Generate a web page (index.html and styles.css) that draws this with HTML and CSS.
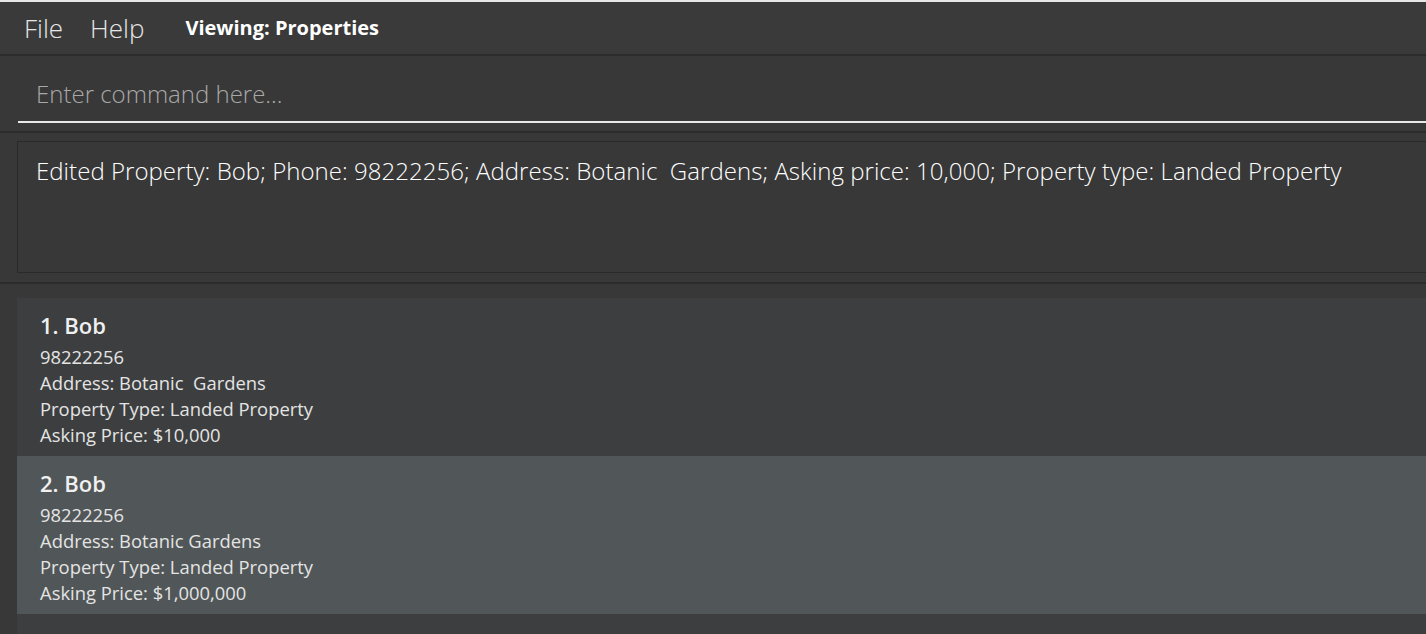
FILE: index.html
```html
<!DOCTYPE html>
<html>
<head>
<meta charset="utf-8">
<link rel="stylesheet" href="styles.css">
</head>
<body>
<div class="window">
  <header class="menubar">
    <span class="menu-item">File</span>
    <span class="menu-item">Help</span>
    <span class="viewing">Viewing: Properties</span>
  </header>
  <section class="command-pane">
    <div class="command-field">Enter command here...</div>
  </section>
  <section class="result-pane">
    <div class="result-box">Edited Property: Bob; Phone: 98222256; Address: Botanic&nbsp; Gardens; Asking price: 10,000; Property type: Landed Property</div>
  </section>
  <section class="list-pane">
    <div class="card even">
      <div class="card-title">1. Bob</div>
      <div class="card-line">98222256</div>
      <div class="card-line">Address: Botanic&nbsp; Gardens</div>
      <div class="card-line">Property Type: Landed Property</div>
      <div class="card-line">Asking Price: $10,000</div>
    </div>
    <div class="card odd">
      <div class="card-title">2. Bob</div>
      <div class="card-line">98222256</div>
      <div class="card-line">Address: Botanic Gardens</div>
      <div class="card-line">Property Type: Landed Property</div>
      <div class="card-line">Asking Price: $1,000,000</div>
    </div>
    <div class="card even">
      <div class="card-title">3. Jack</div>
      <div class="card-line">98222256</div>
    </div>
  </section>
</div>
</body>
</html>
```

FILE: styles.css
```css
html, body {
  margin: 0;
  padding: 0;
  height: 100%;
  overflow: hidden;
  background: #383838;
}
.window {
  font-family: "Open Sans", "Noto Sans", sans-serif;
  border-top: 2px solid #e6e6e6;
  height: 632px;
  overflow: hidden;
  display: flex;
  flex-direction: column;
}
.menubar {
  flex-shrink: 0;
  height: 52px;
  box-sizing: border-box;
  display: flex;
  align-items: center;
  padding: 0 0 1px 24px;
  background: #3a3a3a;
}
.menu-item {
  color: #e6e6e6;
  font-size: 26px;
  font-weight: 300;
  margin-right: 27px;
}
.viewing {
  color: #ffffff;
  font-size: 20px;
  font-weight: 700;
  margin-left: 14px;
}
.command-pane {
  flex-shrink: 0;
  height: 77px;
  box-sizing: border-box;
  background: #383838;
  border-top: 2px solid #2c2c2c;
  padding: 0 0 0 18px;
  display: flex;
  flex-direction: column;
  justify-content: flex-end;
}
.command-field {
  color: #a8a8a8;
  font-size: 24px;
  font-weight: 300;
  line-height: 34px;
  padding: 0 0 10px 18px;
  border-bottom: 2px solid #e8e8e8;
  margin-bottom: 8px;
}
.result-pane {
  flex-shrink: 0;
  height: 153px;
  box-sizing: border-box;
  background: #383838;
  border-top: 2px solid #2c2c2c;
  border-bottom: 2px solid #2c2c2c;
  padding: 8px 0 0 17px;
}
.result-box {
  height: 132px;
  box-sizing: border-box;
  border: 1px solid #2a2a2a;
  border-right: none;
  color: #ffffff;
  font-size: 24px;
  font-weight: 300;
  letter-spacing: 0.04px;
  line-height: 34px;
  padding: 12px 0 0 18px;
  white-space: nowrap;
}
.list-pane {
  flex: 1;
  background: #383838;
  padding: 14px 0 0 17px;
}
.card {
  height: 158px;
  box-sizing: border-box;
  padding: 11px 0 0 23px;
  color: #e4e4e4;
}
.card.even { background: #3c3e3f; }
.card.odd { background: #515658; }
.card-title {
  font-size: 22px;
  font-weight: 600;
  line-height: 32px;
  margin-bottom: 3px;
  color: #f0f0f0;
}
.card-line {
  font-size: 18.4px;
  line-height: 26px;
}
```
